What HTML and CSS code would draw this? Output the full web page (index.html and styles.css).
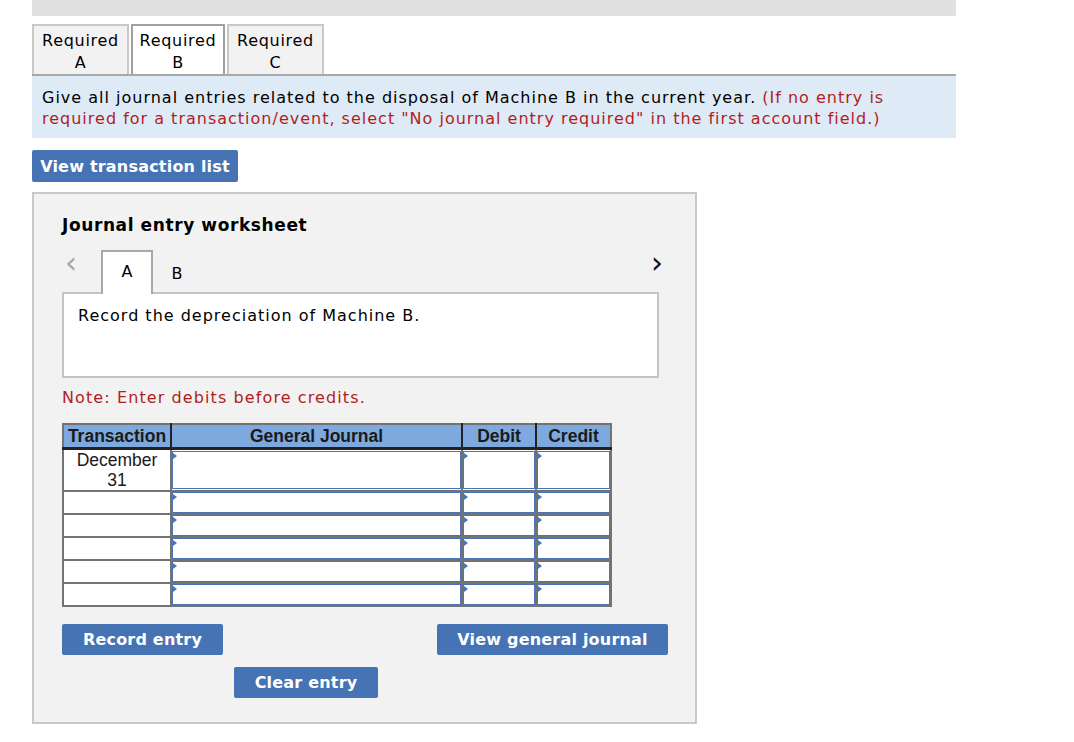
FILE: index.html
```html
<!DOCTYPE html>
<html lang="en">
<head>
    <meta charset="UTF-8">
    <meta name="viewport" content="width=device-width, initial-scale=1.0">
    <title>Journal Entry Worksheet</title>
    <link rel="stylesheet" href="styles.css">
</head>
<body>
    <div class="page">
        <div class="top-bar"></div>

        <div class="req-tabs">
            <div class="req-tab">Required<br>A</div>
            <div class="req-tab active">Required<br>B</div>
            <div class="req-tab">Required<br>C</div>
        </div>

        <div class="instructions">
            Give all journal entries related to the disposal of Machine B in the current year.
            <span class="hint">(If no entry is required for a transaction/event, select "No journal entry required" in the first account field.)</span>
        </div>

        <button class="btn btn-list">View transaction list</button>

        <div class="worksheet">
            <h2>Journal entry worksheet</h2>

            <div class="entry-nav">
                <span class="arrow prev">&lsaquo;</span>
                <div class="entry-tab active">A</div>
                <div class="entry-tab">B</div>
                <span class="arrow next">&rsaquo;</span>
            </div>

            <div class="entry-desc">Record the depreciation of Machine B.</div>

            <div class="note">Note: Enter debits before credits.</div>

            <table class="journal">
                <thead>
                    <tr>
                        <th class="col-trans">Transaction</th>
                        <th class="col-acct">General Journal</th>
                        <th class="col-debit">Debit</th>
                        <th class="col-credit">Credit</th>
                    </tr>
                </thead>
                <tbody>
                    <tr class="first">
                        <td class="date">December<br>31</td>
                        <td><div class="field"></div></td>
                        <td><div class="field"></div></td>
                        <td><div class="field"></div></td>
                    </tr>
                    <tr>
                        <td class="date"></td>
                        <td><div class="field"></div></td>
                        <td><div class="field"></div></td>
                        <td><div class="field"></div></td>
                    </tr>
                    <tr>
                        <td class="date"></td>
                        <td><div class="field"></div></td>
                        <td><div class="field"></div></td>
                        <td><div class="field"></div></td>
                    </tr>
                    <tr>
                        <td class="date"></td>
                        <td><div class="field"></div></td>
                        <td><div class="field"></div></td>
                        <td><div class="field"></div></td>
                    </tr>
                    <tr>
                        <td class="date"></td>
                        <td><div class="field"></div></td>
                        <td><div class="field"></div></td>
                        <td><div class="field"></div></td>
                    </tr>
                    <tr>
                        <td class="date"></td>
                        <td><div class="field"></div></td>
                        <td><div class="field"></div></td>
                        <td><div class="field"></div></td>
                    </tr>
                </tbody>
            </table>

            <div class="actions">
                <button class="btn btn-record">Record entry</button>
                <button class="btn btn-view">View general journal</button>
            </div>
            <div class="actions-2">
                <button class="btn btn-clear">Clear entry</button>
            </div>
        </div>
    </div>
</body>
</html>
```

FILE: styles.css
```css
body {
    margin: 0;
    background-color: #ffffff;
    font-family: "DejaVu Sans", Verdana, sans-serif;
    color: #000;
}

.page {
    width: 924px;
    margin-left: 32px;
}

.top-bar {
    height: 16px;
    background-color: #e0e0e0;
}

/* Required tabs */
.req-tabs {
    display: flex;
    gap: 2px;
    margin-top: 8px;
    border-bottom: 2px solid #a8a8a8;
}

.req-tab {
    width: 93px;
    height: 44px;
    border: 2px solid #c8c8c8;
    border-bottom: none;
    background-color: #f2f2f2;
    text-align: center;
    font-size: 16px;
    letter-spacing: 0.7px;
    line-height: 22px;
    padding-top: 4px;
    box-sizing: content-box;
}

.req-tab.active {
    background-color: #ffffff;
    border-color: #a0a0a0;
    width: 90px;
}

.instructions {
    background-color: #deebf7;
    padding: 11px 10px 9px 10px;
    font-size: 16px;
    letter-spacing: 1px;
    line-height: 21px;
}

.hint {
    color: #b01e1e;
}

/* Buttons */
.btn {
    background-color: #4573b4;
    color: #ffffff;
    border: none;
    border-radius: 2px;
    font-family: "DejaVu Sans", Verdana, sans-serif;
    font-weight: bold;
    font-size: 16px;
    letter-spacing: 0.2px;
    height: 32px;
    padding: 0;
    cursor: pointer;
}

.btn-list {
    width: 206px;
    margin-top: 12px;
    margin-bottom: 10px;
    display: block;
}

/* Worksheet */
.worksheet {
    width: 633px;
    height: 528px;
    background-color: #f2f2f2;
    border: 2px solid #c8c8c8;
    padding: 0 0 0 28px;
    box-sizing: content-box;
}

.worksheet h2 {
    font-size: 17px;
    letter-spacing: 0.6px;
    margin: 21px 0 0 0;
    line-height: 20px;
}

.entry-nav {
    display: flex;
    align-items: flex-end;
    width: 597px;
    height: 42px;
    margin-top: 15px;
}

.arrow {
    font-size: 30px;
    line-height: 30px;
    width: 39px;
    text-align: left;
    padding-left: 3px;
    align-self: flex-start;
    margin-top: -2px;
    color: #a6a6a6;
    box-sizing: border-box;
}

.arrow.next {
    color: #111;
    margin-left: auto;
    width: auto;
    padding-right: 0;
    margin-right: -4px;
}

.entry-tab {
    width: 48px;
    height: 40px;
    text-align: center;
    font-size: 16px;
    line-height: 40px;
    margin-bottom: -2px;
}

.entry-tab.active {
    background-color: #ffffff;
    border: 2px solid #a8a8a8;
    border-bottom: none;
    position: relative;
    z-index: 1;
    padding-bottom: 2px;
}

.entry-desc {
    width: 579px;
    height: 72px;
    background-color: #ffffff;
    border: 2px solid #c4c4c4;
    padding: 10px 0 0 14px;
    font-size: 16px;
    letter-spacing: 1px;
    line-height: 23px;
    box-sizing: content-box;
}

.note {
    color: #b01e1e;
    font-size: 16px;
    letter-spacing: 1.1px;
    margin-top: 10px;
    line-height: 20px;
}

/* Journal table */
.journal {
    border-collapse: collapse;
    margin-top: 15px;
    font-family: "Liberation Sans", Arial, sans-serif;
    font-size: 17.5px;
    border: 2px solid #737373;
    background-color: #ffffff;
}

.journal th {
    background-color: #7ea9de;
    color: #1a1a1a;
    font-weight: bold;
    height: 22px;
    padding: 0;
    border-right: 2px solid #222;
    border-bottom: 3px solid #222;
    line-height: 22px;
}

.journal th:last-child {
    border-right: 2px solid #737373;
}

.col-trans { width: 106px; }
.col-acct { width: 289px; }
.col-debit { width: 72px; }
.col-credit { width: 73px; }

.journal td {
    padding: 0;
    border: 2px solid #737373;
    height: 21px;
}

.journal tr.first td {
    height: 38px;
}

.journal td.date {
    text-align: center;
    vertical-align: top;
    line-height: 20px;
    color: #1a1a1a;
}

.field {
    border: 1px solid #4a74b4;
    box-sizing: border-box;
    position: relative;
    background-color: #ffffff;
}

.journal tr.first .field {
    height: 38px;
}

.journal tr:not(.first) .field {
    height: 21px;
}

.field::before {
    content: "";
    position: absolute;
    top: 1px;
    left: 0;
    border-top: 3px solid transparent;
    border-bottom: 3px solid transparent;
    border-left: 4px solid #4a74b4;
}

/* Action buttons */
.actions {
    display: flex;
    justify-content: space-between;
    width: 606px;
    margin-top: 17px;
}

.btn-record {
    width: 161px;
    height: 31px;
}

.btn-view {
    width: 231px;
    height: 31px;
}

.actions-2 {
    padding-left: 172px;
    margin-top: 12px;
}

.btn-clear {
    width: 144px;
    height: 31px;
}
```
